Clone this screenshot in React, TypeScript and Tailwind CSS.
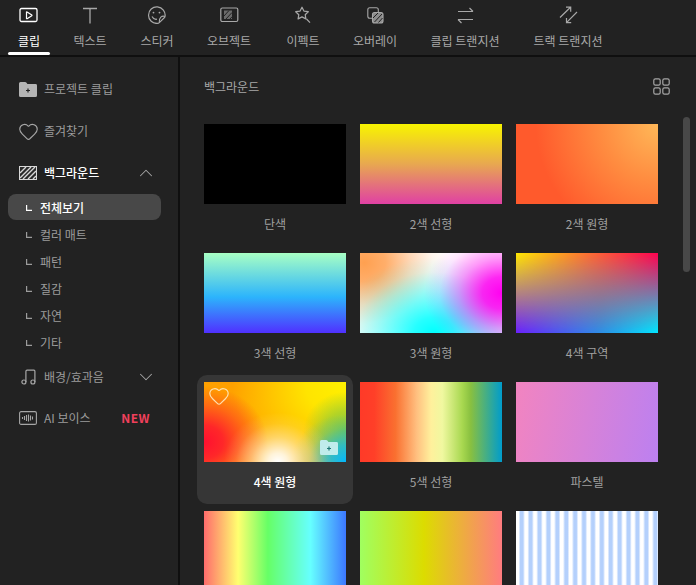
import { Heart, ChevronUp, ChevronDown } from 'lucide-react'

const FONT = "font-['Noto_Sans_CJK_KR','Noto_Sans',sans-serif]"

function ClipIcon() {
  return (
    <svg width="20" height="17" viewBox="0 0 20 17" fill="none" stroke="currentColor">
      <rect x="1" y="1.5" width="17" height="13" rx="1.5" strokeWidth="1.3" />
      <path d="M7.5 5v6.4a.4.4 0 0 0 .6.3l4.7-3a.5.5 0 0 0 0-.8l-4.7-3a.4.4 0 0 0-.6.1z" strokeWidth="1.2" />
    </svg>
  )
}

function TextIcon() {
  return (
    <svg width="16" height="17" viewBox="0 0 16 17" fill="none" stroke="currentColor" strokeWidth="1.3">
      <path d="M1 1.500h14M8 1.500v15" />
    </svg>
  )
}

function StickerIcon() {
  return (
    <svg width="20" height="18" viewBox="0 0 20 18" fill="none" stroke="currentColor" strokeWidth="1.2">
      <path d="M18 10.500A8.300 8.300 0 1 0 10.500 17.400c.8 0 1.300-.3 1.800-.8l4.700-4.600c.6-.5 1-1 1-1.500z" />
      <path d="M18 10.500c-3-1-6.200.6-5.700 6" />
      <path d="M5 10.600c1 2 3 3 5 2.600" />
      <circle cx="6.500" cy="6.600" r=".9" fill="currentColor" stroke="none" />
      <circle cx="12.500" cy="6.600" r=".9" fill="currentColor" stroke="none" />
    </svg>
  )
}

function ObjectIcon() {
  return (
    <svg width="19" height="16" viewBox="0 0 19 16" fill="none" stroke="currentColor">
      <rect x=".8" y="1" width="17" height="13.500" rx="1.500" strokeWidth="1.2" />
      <rect x="4" y="3.500" width="8" height="8.500" fill="currentColor" opacity=".55" stroke="none" />
      <path d="M4 9l5-5.500M6 12l6-6.500M10 12l2-2.200" stroke="#222" strokeWidth="1" />
    </svg>
  )
}

function EffectIcon() {
  return (
    <svg width="18" height="18" viewBox="0 0 18 18" fill="none" stroke="currentColor" strokeWidth="1.2">
      <path d="M8 1.200l1.900 3.900 4.400.6-3.100 3 .7 4.200-3.900-2-3.900 2 .7-4.200-3.100-3 4.400-.6z" strokeLinejoin="round" />
      <path d="M12.500 13l3.500 3.600" />
    </svg>
  )
}

function OverlayIcon() {
  return (
    <svg width="17" height="17" viewBox="0 0 17 17" fill="none" stroke="currentColor" strokeWidth="1.1">
      <rect x=".8" y=".8" width="10.500" height="10.500" rx="2" />
      <rect x="5.500" y="5.500" width="10.500" height="10.500" rx="2" fill="#8c8c8c" stroke="#a8a8a8" />
      <path d="M6 11l5-5M7.500 15l7.500-8M11.500 15.500l4-4.500" stroke="#222" strokeWidth="1" />
    </svg>
  )
}

function ClipTransitionIcon() {
  return (
    <svg width="17" height="17" viewBox="0 0 17 17" fill="none" stroke="currentColor" strokeWidth="1.2">
      <path d="M1 4.500h15M12.500 1l3.500 3.500M16 12.500H1M4.500 16L1 12.500" />
    </svg>
  )
}

function TrackTransitionIcon() {
  return (
    <svg width="19" height="18" viewBox="0 0 19 18" fill="none" stroke="currentColor" strokeWidth="1.2">
      <path d="M1 11.500L11.500 1.200M7 1.200h4.700v4.600M18 6L7.500 16.600M7.500 12v4.600h4.700" />
    </svg>
  )
}

function GridIcon() {
  return (
    <svg width="17" height="17" viewBox="0 0 17 17" fill="none" stroke="#a6a6a6" strokeWidth="1.2">
      <rect x=".8" y=".8" width="6.400" height="6.400" rx="1.600" />
      <rect x="9.800" y=".8" width="6.400" height="6.400" rx="1.600" />
      <rect x=".8" y="9.800" width="6.400" height="6.400" rx="1.600" />
      <rect x="9.800" y="9.800" width="6.400" height="6.400" rx="1.600" />
    </svg>
  )
}

function FolderPlus({ fill, plus }: { fill: string; plus: string }) {
  return (
    <svg width="18" height="15" viewBox="0 0 18 15">
      <path d="M0 1.500A1.500 1.500 0 0 1 1.500 0h4.600c.5 0 .9.2 1.200.6L8.400 2h8A1.500 1.500 0 0 1 18 3.500v10a1.500 1.500 0 0 1-1.500 1.500h-15A1.500 1.500 0 0 1 0 13.500z" fill={fill} />
      <path d="M9 6.500v4M7 8.500h4" stroke={plus} strokeWidth="1.2" />
    </svg>
  )
}

function HatchIcon() {
  return (
    <svg width="18" height="14" viewBox="0 0 18 14" fill="none">
      <rect x=".5" y=".5" width="17" height="13" fill="#2a2a2a" stroke="#d8d8d8" />
      <path d="M1 7l6-6M1 12l11-11M4 13L16 1M9 13l8-8M14 13l3-3" stroke="#d8d8d8" strokeWidth="1.4" />
    </svg>
  )
}

function MusicIcon() {
  return (
    <svg width="16" height="16" viewBox="0 0 16 16" fill="none" stroke="#a6a6a6" strokeWidth="1.2">
      <circle cx="2.900" cy="13" r="2" />
      <circle cx="11.900" cy="13" r="2" />
      <path d="M4.900 13V2.400c0-.8.400-1.200 1.200-1.200h6.800c.7 0 1 .4 1 1V13" />
    </svg>
  )
}

function VoiceIcon() {
  return (
    <svg width="18" height="14" viewBox="0 0 18 14" fill="none" stroke="#a6a6a6">
      <rect x=".6" y=".6" width="16.800" height="12.800" rx="1.500" strokeWidth="1.100" />
      <path d="M3.500 6v2M5.500 5v4M7.500 4v6M9.500 3.500v7M11.500 4.500v5M13.500 5.500v3" strokeWidth="1.100" />
    </svg>
  )
}

function SubMark() {
  return (
    <svg width="6" height="6" viewBox="0 0 6 6" fill="none" stroke="currentColor" strokeWidth="1.200" className="shrink-0">
      <path d="M.6 0v5.400H6" />
    </svg>
  )
}

const tabs = [
  { label: '클립', icon: <ClipIcon />, w: 'w-[56px]', active: true },
  { label: '텍스트', icon: <TextIcon />, w: 'w-[66px]' },
  { label: '스티커', icon: <StickerIcon />, w: 'w-[68px]' },
  { label: '오브젝트', icon: <ObjectIcon />, w: 'w-[76px]' },
  { label: '이펙트', icon: <EffectIcon />, w: 'w-[72px]' },
  { label: '오버레이', icon: <OverlayIcon />, w: 'w-[72px]' },
  { label: '클립 트랜지션', icon: <ClipTransitionIcon />, w: 'w-[108px]' },
  { label: '트랙 트랜지션', icon: <TrackTransitionIcon />, w: 'w-[98px]' },
]

const subs = ['컬러 매트', '패턴', '질감', '자연', '기타']

type Tile = { label: string; bg: string; top?: string; selected?: boolean }

const tiles: Tile[] = [
  { label: '단색', bg: 'bg-black' },
  { label: '2색 선형', bg: 'bg-[linear-gradient(180deg,#f8f400_0%,#e8a850_50%,#e040a4_100%)]' },
  { label: '2색 원형', bg: 'bg-[radial-gradient(circle_at_100%_0%,#ffb858_0%,#ff8c40_35%,#ff5a2c_75%,#ff5a2c_100%)]' },
  { label: '3색 선형', bg: 'bg-[linear-gradient(180deg,#a8ffc4_0%,#2cb4fc_55%,#5030ff_100%)]' },
  { label: '3색 원형', bg: 'bg-[radial-gradient(ellipse_55%_80%_at_100%_50%,#ff00f0_0%,#ff00f0d9_25%,#ff00f066_55%,#ff00f01a_80%,transparent_100%),radial-gradient(ellipse_70%_95%_at_52%_100%,#00ffff_0%,#00ffffd9_20%,#00ffff66_55%,#00ffff1a_80%,transparent_100%),radial-gradient(ellipse_60%_95%_at_3%_12%,#ffa050_0%,#ffa050d9_25%,#ffa05066_55%,#ffa0501a_80%,transparent_100%),linear-gradient(#ffffff,#ffffff)]' },
  { label: '4색 구역', bg: 'bg-[linear-gradient(90deg,#6a20ff_0%,#2c90e8_60%,#00e8ff_100%)]', top: 'bg-[linear-gradient(90deg,#ffe800_0%,#ff7030_50%,#ff0050_100%)]' },
  { label: '4색 원형', selected: true, bg: 'bg-[radial-gradient(ellipse_38%_62%_at_52%_100%,#ffffff_0%,#ffffffd9_18%,#ffffff66_50%,#ffffff1a_78%,transparent_100%),radial-gradient(ellipse_38%_60%_at_100%_100%,#00b8ff_0%,#00b8ffb3_35%,#00b8ff33_70%,transparent_100%),radial-gradient(ellipse_30%_50%_at_100%_62%,#80c840_0%,#80c84099_50%,transparent_100%),radial-gradient(ellipse_45%_70%_at_0%_75%,#ff1030_0%,#ff1030d9_30%,#ff103066_65%,transparent_100%),radial-gradient(ellipse_80%_110%_at_100%_5%,#fff000_0%,#fff000d9_35%,#fff00066_70%,transparent_100%),linear-gradient(#ffa000,#ffb000)]' },
  { label: '5색 선형', bg: 'bg-[linear-gradient(90deg,#ff3a28_0%,#ff3f28_10%,#fa7030_25%,#ffc080_40%,#fff09c_50%,#f0f8a0_58%,#a8d850_72%,#88c040_78%,#009ccc_100%)]' },
  { label: '파스텔', bg: 'bg-[linear-gradient(100deg,#f284c0_0%,#bc80f0_100%)]' },
  { label: '', bg: 'bg-[linear-gradient(90deg,#ff6c6c_0%,#ffff70_24%,#66ff66_45%,#66ffff_75%,#3c78ff_100%)]' },
  { label: '', bg: 'bg-[linear-gradient(90deg,#a0ff60_0%,#dcdc00_45%,#ff7c80_100%)]' },
  { label: '', bg: 'bg-[repeating-linear-gradient(90deg,#ffffff_0px,#ffffff_2.5px,#b4d0fc_4.5px,#b4d0fc_7px,#ffffff_8.9px)]' },
]

export default function App() {
  return (
    <div className={`${FONT} flex h-[585px] w-[696px] flex-col overflow-hidden bg-[#222222] text-[12px]`}>
      {/* top tabs */}
      <div className="flex h-[57px] shrink-0 items-start border-b-2 border-[#0f0f0f] pl-[1px]">
        {tabs.map((t) => (
          <div key={t.label} className={`${t.w} relative flex h-[55px] shrink-0 flex-col items-center ${t.active ? 'text-white' : 'text-[#a8a8a8]'}`}>
            <div className="flex h-[24px] items-center pt-[6px]">{t.icon}</div>
            <span className="mt-[8px] leading-[18px] whitespace-nowrap">{t.label}</span>
            {t.active && <div className="absolute bottom-0 left-[7px] h-[3px] w-[42px] rounded-full bg-white" />}
          </div>
        ))}
      </div>

      <div className="flex min-h-0 flex-1">
        {/* sidebar */}
        <div className="flex w-[180px] shrink-0 flex-col border-r-2 border-[#0f0f0f] pt-[22px] text-[#a8a8a8]">
          <div className="flex h-[20px] items-center gap-[7px] pl-[19px]">
            <FolderPlus fill="#b4b4b4" plus="#222222" />
            <span className="text-[#9c9c9c]">프로젝트 클립</span>
          </div>
          <div className="mt-[22px] flex h-[20px] items-center gap-[5px] pl-[18px]">
            <Heart size={21} strokeWidth={1.300} className="text-[#a6a6a6]" />
            <span className="text-[#9c9c9c]">즐겨찾기</span>
          </div>
          <div className="mt-[22px] flex h-[20px] items-center gap-[7px] pl-[19px] pr-[21px]">
            <HatchIcon />
            <span className="flex-1 font-medium text-white">백그라운드</span>
            <ChevronUp size={22} strokeWidth={1.100} className="text-[#a6a6a6]" />
          </div>
          <div className="mt-[11px] ml-[8px] flex h-[26px] w-[153px] items-center gap-[8px] rounded-[8px] bg-[#484848] pl-[18px] pt-[2px] font-medium text-white">
            <SubMark />
            <span>전체보기</span>
          </div>
          {subs.map((s) => (
            <div key={s} className="ml-[8px] flex h-[27px] items-center gap-[8px] pl-[18px] pt-[2px] text-[#9c9c9c]">
              <SubMark />
              <span>{s}</span>
            </div>
          ))}
          <div className="mt-[12px] flex h-[20px] items-center gap-[7px] pl-[21px] pr-[21px]">
            <MusicIcon />
            <span className="flex-1 text-[#9c9c9c]">배경/효과음</span>
            <ChevronDown size={22} strokeWidth={1.100} className="text-[#a6a6a6]" />
          </div>
          <div className="mt-[21px] flex h-[20px] items-center gap-[7px] pl-[19px] pr-[28px]">
            <VoiceIcon />
            <span className="flex-1 text-[#9c9c9c]">AI 보이스</span>
            <span className="text-[12px] font-bold tracking-[0.5px] text-[#f0405c]">NEW</span>
          </div>
        </div>

        {/* content */}
        <div className="flex min-w-0 flex-1">
          <div className="w-[503px] shrink-0 pl-[24px]">
            <div className="flex h-[67px] items-start justify-between pt-[21px] pr-[13px] text-[#a8a8a8]">
              <span className="leading-[18px]">백그라운드</span>
              <GridIcon />
            </div>
            <div className="grid grid-cols-[142px_142px_142px] gap-x-[14px] gap-y-[7px]">
              {tiles.map((t, i) => (
                <div key={i} className={`relative flex h-[122px] w-[142px] flex-col items-center ${t.selected ? 'text-white' : 'text-[#a0a0a0]'}`}>
                  {t.selected && <div className="absolute top-[-7px] -left-[7px] h-[129px] w-[156px] rounded-[10px] bg-[#363636]" />}
                  <div className={`${t.bg} relative h-[80px] w-[142px] shrink-0`}>
                    {t.top && <div className={`${t.top} h-full w-full [mask-image:linear-gradient(180deg,#000,transparent)]`} />}
                    {t.selected && (
                      <>
                        <Heart size={22} strokeWidth={1.300} className="absolute top-[3px] left-[4px] text-[#ffe0b0]" />
                        <div className="absolute right-[8px] bottom-[7px]">
                          <FolderPlus fill="#c0ecec" plus="#207878" />
                        </div>
                      </>
                    )}
                  </div>
                  <span className={`relative mt-[11px] leading-[18px] ${t.selected ? 'font-medium' : ''}`}>{t.label}</span>
                </div>
              ))}
            </div>
          </div>
          <div className="mt-[60px] h-[155px] w-[7px] shrink-0 rounded-full bg-[#484848]" />
        </div>
      </div>
    </div>
  )
}
